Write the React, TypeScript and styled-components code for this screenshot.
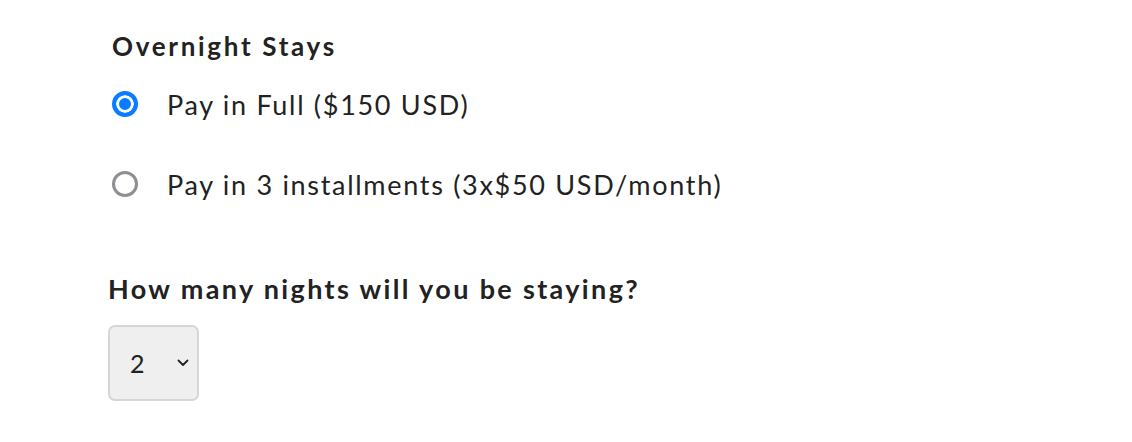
import React, {useState} from "react";
import styled, {createGlobalStyle} from 'styled-components'

const GlobalStyle = createGlobalStyle`
  body {
    margin: 0;
    background: #ffffff;
    font-family: Lato, "Open Sans", sans-serif;
    color: #222222;
  }
`

const Page = styled.div`
  display: flex;
  flex-direction: column;
  align-items: flex-start;
  padding: 30px 0 0 108px;
`

const Fieldset = styled.fieldset`
  border: none;
  margin: 0;
  padding: 0 0 0 4px;
  display: flex;
  flex-direction: column;
  gap: 40px;
`

const Legend = styled.legend`
  padding: 0;
  margin-bottom: 22px;
  font-size: 26px;
  line-height: 32px;
  font-weight: 700;
  letter-spacing: 2.7px;
`

const Option = styled.label`
  display: flex;
  align-items: center;
  gap: 29px;
  height: 40px;
  font-size: 27px;
  letter-spacing: 1.7px;
  cursor: pointer;
`

const Radio = styled.input.attrs({type: 'radio'})`
  appearance: none;
  margin: 0;
  width: 26px;
  height: 26px;
  border-radius: 50%;
  box-sizing: border-box;
  border: 3px solid #8e8e93;
  background: #ffffff;

  &:checked {
    border: 4px solid #0a7cff;
    background: #0a7cff;
    box-shadow: inset 0 0 0 3px #ffffff;
  }
`

const Question = styled.label`
  margin-top: 68px;
  font-size: 27px;
  line-height: 34px;
  font-weight: 700;
  letter-spacing: 2.35px;
`

const SelectWrap = styled.div`
  position: relative;
  margin-top: 19px;
  width: 91px;
  height: 76px;
`

const Select = styled.select`
  appearance: none;
  width: 100%;
  height: 100%;
  box-sizing: border-box;
  margin: 0;
  padding: 0 0 0 20px;
  border: 2px solid #d6d6d6;
  border-radius: 7px;
  background: #efefef;
  color: #222222;
  font-family: inherit;
  font-size: 25px;
`

const Chevron = styled.svg`
  position: absolute;
  right: 10px;
  top: 34px;
  pointer-events: none;
`

const plans = [
  {id: 'full', label: 'Pay in Full ($150 USD)'},
  {id: 'installments', label: 'Pay in 3 installments (3x$50 USD/month)'},
]

const App = () => {
  const [plan, setPlan] = useState('full')
  const [nights, setNights] = useState('2')

  return (
    <>
      <GlobalStyle/>
      <Page>
        <Fieldset>
          <Legend>Overnight Stays</Legend>
          {plans.map(p => (
            <Option key={p.id}>
              <Radio
                name="plan"
                checked={plan === p.id}
                onChange={() => setPlan(p.id)}
              />
              {p.label}
            </Option>
          ))}
        </Fieldset>
        <Question htmlFor="nights">How many nights will you be staying?</Question>
        <SelectWrap>
          <Select id="nights" value={nights} onChange={e => setNights(e.target.value)}>
            {[1, 2, 3, 4, 5].map(n => <option key={n} value={n}>{n}</option>)}
          </Select>
          <Chevron width="12" height="8" viewBox="0 0 12 8">
            <path d="M1.5 1.5l4.5 4.5 4.5-4.5" fill="none" stroke="#222" strokeWidth="1.8" strokeLinecap="round" strokeLinejoin="round"/>
          </Chevron>
        </SelectWrap>
      </Page>
    </>
  )
}

export default App
